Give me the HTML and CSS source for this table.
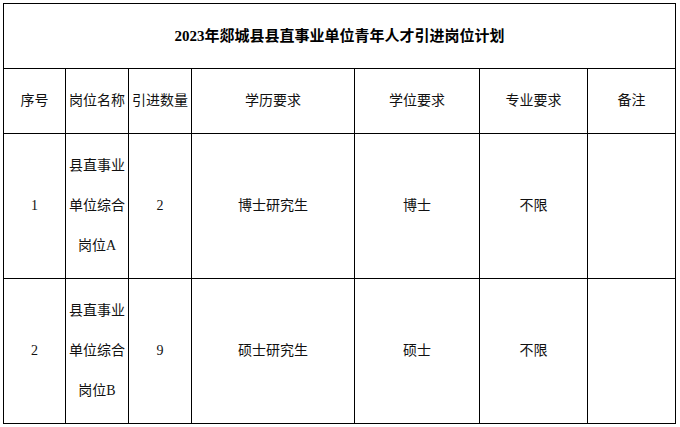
FILE: index.html
```html
<!DOCTYPE html>
<html lang="zh-CN">
<head>
<meta charset="utf-8">
<title>2023年郯城县县直事业单位青年人才引进岗位计划</title>
<link rel="stylesheet" href="styles.css">
</head>
<body>
<table class="plan">
  <colgroup>
    <col class="c1"><col class="c2"><col class="c3"><col class="c4"><col class="c5"><col class="c6"><col class="c7">
  </colgroup>
  <tr class="title-row">
    <td colspan="7" class="title">2023年郯城县县直事业单位青年人才引进岗位计划</td>
  </tr>
  <tr class="head-row">
    <td>序号</td>
    <td>岗位名称</td>
    <td>引进数量</td>
    <td>学历要求</td>
    <td>学位要求</td>
    <td>专业要求</td>
    <td>备注</td>
  </tr>
  <tr class="data-row">
    <td>1</td>
    <td class="multi">县直事业<br>单位综合<br>岗位A</td>
    <td>2</td>
    <td>博士研究生</td>
    <td>博士</td>
    <td>不限</td>
    <td></td>
  </tr>
  <tr class="data-row">
    <td>2</td>
    <td class="multi">县直事业<br>单位综合<br>岗位B</td>
    <td>9</td>
    <td>硕士研究生</td>
    <td>硕士</td>
    <td>不限</td>
    <td></td>
  </tr>
</table>
</body>
</html>
```

FILE: styles.css
```css
html, body {
  background: #ffffff;
}
body {
  margin: 0;
  padding: 3px 0 0 3px;
  font-family: "Liberation Serif", "Noto Sans CJK SC", serif;
  color: #111111;
}
.plan {
  border-collapse: collapse;
  table-layout: fixed;
  width: 673px;
}
.c1 { width: 62px; }
.c2 { width: 63px; }
.c3 { width: 63px; }
.c4 { width: 163px; }
.c5 { width: 125px; }
.c6 { width: 108px; }
.c7 { width: 88px; }
.plan td {
  border: 1px solid #000000;
  padding: 0;
  text-align: center;
  vertical-align: middle;
  font-size: 14px;
  line-height: 20px;
  white-space: nowrap;
}
.title-row { height: 65px; }
.head-row { height: 65px; }
.data-row { height: 145px; }
.plan td.title {
  font-size: 15px;
  font-weight: bold;
  color: #000000;
}
.plan td.multi {
  line-height: 40px;
}
```
